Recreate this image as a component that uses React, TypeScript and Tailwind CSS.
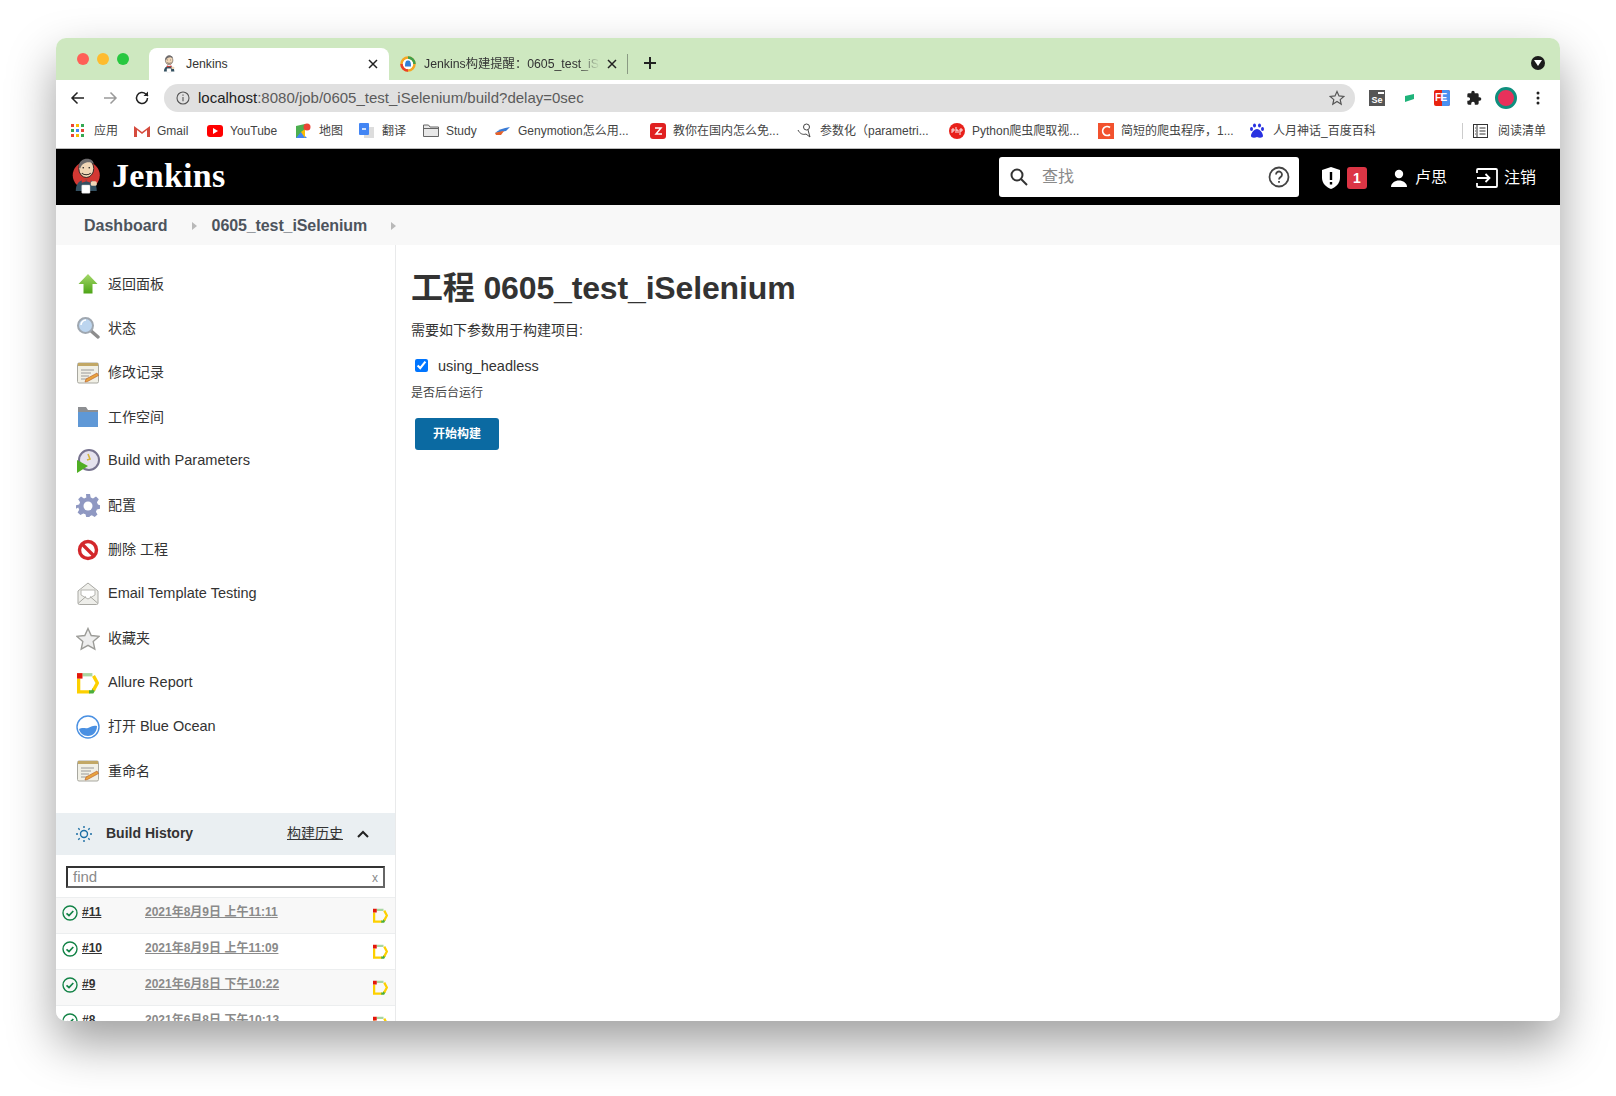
import React from "react";

const Butler = ({ s = 32, disc = true }: { s?: number; disc?: boolean }) => (
  <svg width={s} height={s * 1.2} viewBox="0 0 40 48">
    {disc && <circle cx="19" cy="23" r="18" fill="#d33833" />}
    <path d="M5 44c0-10 5-15 14-15s14 5 14 15z" fill="#335061" />
    <ellipse cx="19" cy="14" rx="10" ry="12" fill="#f0d6b7" stroke="#231f20" strokeWidth="1.2" />
    <path d="M9 12C9 4 15 1 20 1c5 0 9 3 9 7-4-3-10-3-14 0-2 1-3 3-4 6z" fill="#6d6b6d" />
    <path d="M13 20c3 3 9 3 12 0" fill="none" stroke="#231f20" strokeWidth="1.4" />
    <circle cx="15" cy="13" r="1.1" fill="#231f20" />
    <circle cx="23" cy="13" r="1.1" fill="#231f20" />
    <path d="M13 27l6 3 6-3v6l-6-2-6 2z" fill="#d33833" />
    <rect x="13" y="36" width="11" height="11" rx="1" fill="#fff" stroke="#ccc" strokeWidth=".6" />
    <rect x="25" y="31" width="8" height="6" rx="2" fill="#f0d6b7" />
  </svg>
);

const Allure = ({ s = 20 }: { s?: number }) => (
  <svg width={s} height={s} viewBox="0 0 20 20" fill="none" strokeWidth="3">
    <path d="M1.500 6V18H12" stroke="#fdd000" />
    <path d="M11 18H14L15.500 15.500" stroke="#4caf3a" />
    <path d="M15 16.500L18.500 10L15 3.500" stroke="#fdd000" />
    <path d="M5 2.500H14" stroke="#a9d6a0" />
    <rect x="0" y="1" width="5" height="5" fill="#e3170a" />
  </svg>
);

const Notepad = () => (
  <svg width="24" height="24" viewBox="0 0 24 24">
    <rect x="1.500" y="2" width="21" height="20" rx="1.500" fill="#f1f0e6" stroke="#a8a8a0" />
    <rect x="2" y="2" width="20" height="3" fill="#c2a866" />
    <path d="M5 9h13M5 12h10M5 15h8M5 18h7" stroke="#9a9a9a" strokeWidth="1" />
    <path d="M10 18l11-6 1.500 2.500-11 6-2.500.5z" fill="#e8a33d" stroke="#b55a2a" strokeWidth=".6" />
  </svg>
);

const sideIcons: Record<string, React.ReactNode> = {
  up: (
    <svg width="24" height="24" viewBox="0 0 24 24">
      <defs>
        <linearGradient id="upg" x1="0" y1="0" x2="0" y2="1">
          <stop offset="0" stopColor="#a5d86a" />
          <stop offset="1" stopColor="#4da416" />
        </linearGradient>
      </defs>
      <path d="M12 2l9.500 10H16.500v9.500h-9V12H2.500z" fill="url(#upg)" />
    </svg>
  ),
  search: (
    <svg width="24" height="24" viewBox="0 0 24 24">
      <path d="M14 14l8 7" stroke="#8d8d8d" strokeWidth="3.400" strokeLinecap="round" />
      <circle cx="9.500" cy="9.500" r="7.500" fill="#bcd5ef" stroke="#9fa7b0" strokeWidth="2" />
      <path d="M5 9a5 5 0 0 1 5-5" stroke="#fff" strokeWidth="1.500" fill="none" />
    </svg>
  ),
  note: <Notepad />,
  folder: (
    <svg width="24" height="24" viewBox="0 0 24 24">
      <path d="M2 2h8l2 3h10v17H2z" fill="#8d8f92" />
      <path d="M2 7h20v14a1 1 0 0 1-1 1H3a1 1 0 0 1-1-1z" fill="#5f98d6" />
    </svg>
  ),
  build: (
    <svg width="24" height="24" viewBox="0 0 24 24">
      <circle cx="13" cy="11" r="10" fill="#e5e2ee" stroke="#77738f" strokeWidth="2" />
      <path d="M12 5l2 5-3 1" fill="none" stroke="#d6b43a" strokeWidth="1.600" />
      <path d="M1 11l11 6-11 7z" fill="#4fae24" />
    </svg>
  ),
  gear: (
    <svg width="24" height="24" viewBox="0 0 24 24">
      <path
        d="M10 1h4l.7 3.400 2.300 1 3-1.900 2.800 2.800-1.900 3 1 2.300L24 12.300v3.400l-3.100.7-1 2.300 1.600 2.800-2.800 2.500-2.900-1.700-2.200.9L13.800 24h-3.600l-.7-2.700-2.200-.9-2.900 1.700-2.800-2.500 1.600-2.800-1-2.300L0 15.700v-3.400l3.100-.7 1-2.300-1.900-3L5 3.500l3 1.900 2.300-1z"
        transform="translate(0 -1)"
        fill="#8f98c2"
      />
      <circle cx="12" cy="12" r="4.500" fill="#fff" />
    </svg>
  ),
  stop: (
    <svg width="24" height="24" viewBox="0 0 24 24">
      <circle cx="12" cy="12" r="8.500" fill="#fff" stroke="#d3272b" strokeWidth="3.400" />
      <path d="M6 6l12 12" stroke="#d3272b" strokeWidth="3.400" />
    </svg>
  ),
  mail: (
    <svg width="24" height="24" viewBox="0 0 24 24">
      <path d="M2 9l10-8 10 8v12a1.500 1.500 0 0 1-1.500 1.500h-17A1.500 1.500 0 0 1 2 21z" fill="#eeeeea" stroke="#a8a8a3" />
      <path d="M5 8h14v5l-7 4-7-4z" fill="#fff" stroke="#b5b5b0" />
      <path d="M2.500 21L10 14.500M21.500 21L14 14.500" stroke="#a8a8a2" />
    </svg>
  ),
  star: (
    <svg width="24" height="24" viewBox="0 0 24 24">
      <path
        d="M12 1.500l3.200 7 7.800.9-5.800 5.200 1.600 7.600L12 18.300l-6.800 3.900 1.600-7.600L1 9.400l7.800-.9z"
        fill="#eee"
        stroke="#9b9b97"
        strokeWidth="1.400"
      />
    </svg>
  ),
  allure: <Allure s={22} />,
  ocean: (
    <svg width="24" height="24" viewBox="0 0 24 24">
      <circle cx="12" cy="12" r="11" fill="#fff" stroke="#4a90e2" strokeWidth="1.400" />
      <path d="M3 14c4-2 6 0 9-1s5-3 9-2c0 6-4 10-9 10s-8-3-9-7z" fill="#4a90e2" />
    </svg>
  ),
};

const items: [string, React.ReactNode][] = [
  ["up", "返回面板"],
  ["search", "状态"],
  ["note", "修改记录"],
  ["folder", "工作空间"],
  ["build", <span className="text-[14.6px]">Build with Parameters</span>],
  ["gear", "配置"],
  ["stop", "删除 工程"],
  ["mail", <span className="text-[14.5px]">Email Template Testing</span>],
  ["star", "收藏夹"],
  ["allure", <span className="text-[14.5px]">Allure Report</span>],
  ["ocean", <>打开 <span className="text-[14.5px]">Blue Ocean</span></>],
  ["note", "重命名"],
];

const builds = [
  ["#11", "2021年8月9日 上午11:11"],
  ["#10", "2021年8月9日 上午11:09"],
  ["#9", "2021年6月8日 下午10:22"],
  ["#8", "2021年6月8日 下午10:13"],
];

const marks: [React.ReactNode, string, string][] = [
  [
    <svg width="14" height="14" viewBox="0 0 14 14">
      {[1, 6, 11].map((y, r) =>
        [1, 6, 11].map((x, c) => (
          <rect key={`${r}${c}`} x={x - 1} y={y - 1} width="3" height="3" fill={["#ea4335", "#fbbc04", "#34a853", "#4285f4"][(r * 2 + c) % 4]} />
        ))
      )}
    </svg>,
    "应用",
    "w-[63px]",
  ],
  [
    <svg width="16" height="12" viewBox="0 0 16 12">
      <path d="M0 1l8 6 8-6v11h-3V5L8 9 3 5v7H0z" fill="#d54b3d" />
    </svg>,
    "Gmail",
    "w-[73px]",
  ],
  [
    <svg width="16" height="12" viewBox="0 0 16 12">
      <rect width="16" height="12" rx="3" fill="#f00" />
      <path d="M6 3l5 3-5 3z" fill="#fff" />
    </svg>,
    "YouTube",
    "w-[89px]",
  ],
  [
    <svg width="15" height="16" viewBox="0 0 15 16">
      <path d="M0 3l9-2v14H0z" fill="#4caf50" />
      <path d="M0 15l5-6 6 6z" fill="#4285f4" />
      <path d="M5 9l4-3v9z" fill="#fbbc04" />
      <circle cx="11" cy="4" r="3.500" fill="#ea4335" />
    </svg>,
    "地图",
    "w-[63px]",
  ],
  [
    <svg width="15" height="15" viewBox="0 0 15 15">
      <rect x="5" y="4" width="10" height="11" fill="#ddd" />
      <rect width="10" height="12" rx="1" fill="#4285f4" />
      <path d="M3 6h4" stroke="#fff" strokeWidth="1.500" />
    </svg>,
    "翻译",
    "w-[64px]",
  ],
  [
    <svg width="16" height="13" viewBox="0 0 16 13" fill="#e8e8e8" stroke="#666">
      <path d="M.5 1h5l1.500 2h8.500v9.500H.5z" />
      <path d="M.5 4.500h15" />
    </svg>,
    "Study",
    "w-[72px]",
  ],
  [
    <svg width="15" height="8" viewBox="0 0 15 8">
      <path d="M0 6c3-3 8-5 15-6l-4 4z" fill="#3a7bd5" />
      <path d="M0 6c3-1 6-2 9-2L6 8H1z" fill="#e5622a" />
    </svg>,
    "Genymotion怎么用...",
    "w-[155px]",
  ],
  [
    <svg width="16" height="16" viewBox="0 0 16 16">
      <rect width="16" height="16" rx="3" fill="#e02020" />
      <path d="M5 5h6L6 11h6" stroke="#fff" strokeWidth="1.500" fill="none" />
    </svg>,
    "教你在国内怎么免...",
    "w-[147px]",
  ],
  [
    <svg width="15" height="15" viewBox="0 0 15 15" fill="none" stroke="#444" strokeWidth="1">
      <circle cx="9.500" cy="4" r="3" />
      <path d="M1 7c2 4 5 5 8 4l4 3-2-7" />
    </svg>,
    "参数化（parametri...",
    "w-[152px]",
  ],
  [
    <svg width="16" height="16" viewBox="0 0 16 16">
      <circle cx="8" cy="8" r="8" fill="#e8201a" />
      <path d="M3 10V6h2v2H3M7 4v6M7 7h2v3M11 12V6h2v2h-2" stroke="#fff" strokeWidth=".9" fill="none" />
    </svg>,
    "Python爬虫爬取视...",
    "w-[149px]",
  ],
  [
    <svg width="16" height="16" viewBox="0 0 16 16">
      <rect width="16" height="16" fill="#f2522e" />
      <path d="M12 4.500A4.500 4.500 0 1 0 12 11.500" stroke="#fff" strokeWidth="1.700" fill="none" />
    </svg>,
    "简短的爬虫程序，1...",
    "w-[152px]",
  ],
  [
    <svg width="14" height="15" viewBox="0 0 14 15" fill="#2932e1">
      <ellipse cx="4.500" cy="2.500" rx="1.500" ry="2" />
      <ellipse cx="9.500" cy="2.500" rx="1.500" ry="2" />
      <ellipse cx="1.500" cy="6" rx="1.500" ry="2" />
      <ellipse cx="12.500" cy="6" rx="1.500" ry="2" />
      <path d="M7 6c3 0 6 4 6 7 0 2-4 2-6 1-2 1-6 1-6-1 0-3 3-7 6-7z" />
    </svg>,
    "人月神话_百度百科",
    "",
  ],
];

export default function App() {
  return (
    <div className="w-[1616px] h-[1096px] bg-white pt-[38px] pl-[56px] overflow-hidden font-['Liberation_Sans','Noto_Sans_CJK_SC',sans-serif]">
      <div className="w-[1504px] h-[983px] rounded-[10px] overflow-hidden bg-white flex flex-col shadow-[0_22px_48px_rgba(0,0,0,0.38)]">
        {/* tab strip */}
        <div className="h-[42px] shrink-0 bg-[#cee8c0] flex items-end relative">
          <div className="flex items-center gap-[8px] pl-[21px] w-[93px] h-[32px] self-end mb-[5px]">
            <span className="w-[12px] h-[12px] rounded-full bg-[#ff5f57]" />
            <span className="w-[12px] h-[12px] rounded-full bg-[#febc2e]" />
            <span className="w-[12px] h-[12px] rounded-full bg-[#28c840]" />
          </div>
          <div className="w-[240px] h-[32px] bg-white rounded-t-[8px] flex items-center pl-[13px] pr-[11px] text-[12px] text-[#333]">
            <Butler s={15} disc={false} />
            <span className="ml-[9px] grow text-[12.3px]">Jenkins</span>
            <svg width="10" height="10" viewBox="0 0 10 10" stroke="#222" strokeWidth="1.500">
              <path d="M1 1l8 8M9 1l-8 8" />
            </svg>
          </div>
          <div className="w-[238px] h-[32px] flex items-center pl-[11px] pr-[10px] text-[12px] text-[#333]">
            <svg width="16" height="16" viewBox="0 0 16 16" className="shrink-0">
              <circle cx="8" cy="8" r="6.500" fill="#fff" stroke="#f5a623" strokeWidth="2.500" />
              <path d="M1.500 8a6.500 6.500 0 0 0 6.500 6.500" fill="none" stroke="#e8402a" strokeWidth="2.500" />
              <path d="M8 1.500a6.500 6.500 0 0 1 6.500 6.500" fill="none" stroke="#3fa04b" strokeWidth="2.500" />
              <path d="M5 10.500c0-5 1-6 3-6s3 1 3 6z" fill="#2f80d8" />
            </svg>
            <span className="ml-[8px] w-[176px] overflow-hidden whitespace-nowrap text-[12.300px] [mask-image:linear-gradient(to_right,#000_88%,transparent)]">
              Jenkins构建提醒：0605_test_iSelenium
            </span>
            <svg width="10" height="10" viewBox="0 0 10 10" stroke="#222" strokeWidth="1.500" className="ml-auto shrink-0">
              <path d="M1 1l8 8M9 1l-8 8" />
            </svg>
          </div>
          <div className="w-px h-[20px] bg-[#8a9a83] mb-[6px]" />
          <svg width="14" height="14" viewBox="0 0 14 14" stroke="#222" strokeWidth="2" className="ml-[15px] mb-[10px]">
            <path d="M7 1v12M1 7h12" />
          </svg>
          <div className="ml-auto mr-[15px] mb-[10px] w-[14px] h-[14px] rounded-full bg-[#1c1c1c] flex items-center justify-center">
            <svg width="8" height="6" viewBox="0 0 8 6" fill="#fff">
              <path d="M0 0h8L4 6z" />
            </svg>
          </div>
        </div>
        {/* toolbar */}
        <div className="h-[33px] shrink-0 flex items-center pt-[3px]">
          <svg width="16" height="16" viewBox="0 0 16 16" fill="none" stroke="#222" strokeWidth="1.500" className="ml-[14px]">
            <path d="M14 8H2M7.500 2.500L2 8l5.500 5.500" />
          </svg>
          <svg width="16" height="16" viewBox="0 0 16 16" fill="none" stroke="#9a9a9a" strokeWidth="1.500" className="ml-[16px]">
            <path d="M2 8h12M8.500 2.500L14 8l-5.500 5.500" />
          </svg>
          <svg width="16" height="16" viewBox="0 0 16 16" fill="none" stroke="#222" strokeWidth="1.500" className="ml-[16px]">
            <path d="M13.500 8a5.500 5.500 0 1 1-1.700-4L14 6" />
            <path d="M14 1.500V6H9.500" fill="#222" stroke="none" />
          </svg>
          <div className="ml-[14px] w-[1191px] h-[28px] rounded-full bg-[#e0e0e0] flex items-center pl-[12px] pr-[10px]">
            <svg width="14" height="14" viewBox="0 0 14 14" fill="none" stroke="#555" strokeWidth="1.100">
              <circle cx="7" cy="7" r="6" />
              <path d="M7 6v4.200M7 3.500v1.300" />
            </svg>
            <span className="ml-[8px] text-[15px] text-[#5b5b5b]">
              <span className="text-[#222]">localhost</span>:8080/job/0605_test_iSelenium/build?delay=0sec
            </span>
            <svg width="16" height="16" viewBox="0 0 16 16" fill="none" stroke="#555" strokeWidth="1.200" className="ml-auto">
              <path d="M8 1.500l2 4.400 4.800.5-3.600 3.200 1 4.700L8 11.500l-4.200 2.800 1-4.700L1.200 6.400 6 5.900z" />
            </svg>
          </div>
          <div className="ml-[14px] w-[16px] h-[16px] bg-[#555] relative flex items-end justify-center text-white text-[9px] leading-[11px] font-bold">
            Se
            <span className="absolute top-[2px] right-[1px] w-[6px] h-[2px] bg-white" />
          </div>
          <svg width="10" height="8" viewBox="0 0 10 8" className="ml-[20px]">
            <path d="M0 2l9-2v5l-9 3z" fill="#1fb37a" />
          </svg>
          <div className="ml-[19px] w-[16px] h-[16px] rounded-[2px] bg-[#e8230f] relative overflow-hidden flex items-center text-white text-[10px] font-bold leading-none">
            <span className="absolute right-0 top-0 w-[8px] h-[16px] bg-[#4a90f0]" />
            <span className="relative tracking-[-0.5px] pl-[1px]">FE</span>
          </div>
          <svg width="16" height="16" viewBox="0 0 24 24" fill="#222" className="ml-[16px]">
            <path d="M20.500 11H19V7a2 2 0 0 0-2-2h-4V3.500a2.500 2.500 0 0 0-5 0V5H4a2 2 0 0 0-2 2v3.800h1.500a2.700 2.700 0 0 1 0 5.400H2V20a2 2 0 0 0 2 2h3.800v-1.500a2.700 2.700 0 0 1 5.400 0V22H17a2 2 0 0 0 2-2v-4h1.500a2.500 2.500 0 0 0 0-5z" />
          </svg>
          <div className="ml-[13px] w-[22px] h-[22px] rounded-full bg-[#e8315b] border-[3px] border-[#0f8f7e]" />
          <svg width="4" height="14" viewBox="0 0 4 14" fill="#222" className="ml-[19px]">
            <circle cx="2" cy="2" r="1.500" />
            <circle cx="2" cy="7" r="1.500" />
            <circle cx="2" cy="12" r="1.500" />
          </svg>
        </div>
        {/* bookmarks */}
        <div className="h-[36px] shrink-0 flex items-center pl-[15px] pr-[14px] text-[12px] text-[#444] border-b border-[#bbb]">
          {marks.map(([icon, label, w], i) => (
            <div key={i} className={`flex items-center shrink-0 ${w}`}>
              <span className="w-[23px] shrink-0 flex items-center">{icon}</span>
              <span className="whitespace-nowrap">{label}</span>
            </div>
          ))}
          <div className="ml-auto h-[16px] w-px bg-[#ccc] mr-[10px]" />
          <svg width="15" height="14" viewBox="0 0 15 14" fill="none" stroke="#333" className="mr-[10px]">
            <rect x=".5" y=".5" width="14" height="13" />
            <path d="M4 .5v13M6.500 4h6M6.500 7h6M6.500 10h6M2 4h.8M2 7h.8M2 10h.8" />
          </svg>
          <span>阅读清单</span>
        </div>
        {/* jenkins header */}
        <header className="h-[56px] shrink-0 bg-black flex items-center text-white">
          <div className="ml-[16px] mt-[-2px]">
            <Butler s={30} />
          </div>
          <span className="ml-[10px] mt-[-2px] font-['Liberation_Serif',serif] font-bold text-[34px] tracking-[0.3px] leading-none">Jenkins</span>
          <div className="ml-auto w-[300px] h-[40px] bg-white rounded-[3px] flex items-center pl-[10px] pr-[9px] text-[#8a8a8a]">
            <svg width="20" height="20" viewBox="0 0 20 20" fill="none" stroke="#333" strokeWidth="2">
              <circle cx="8" cy="8" r="5.500" />
              <path d="M12 12l6 6" />
            </svg>
            <span className="ml-[13px] text-[16px] grow">查找</span>
            <svg width="22" height="22" viewBox="0 0 22 22" fill="none" stroke="#444" strokeWidth="1.800">
              <circle cx="11" cy="11" r="9.500" />
              <path d="M8 8.500a3 3 0 1 1 4.500 2.600c-1 .6-1.500 1-1.500 2.400M11 15v1.800" />
            </svg>
          </div>
          <svg width="18" height="22" viewBox="0 0 18 22" className="ml-[23px] mt-[2px]">
            <path d="M9 0l9 3v8c0 5-4 9-9 11-5-2-9-6-9-11V3z" fill="#fff" />
            <path d="M9 5v8M9 15v2.500" stroke="#000" strokeWidth="2.400" />
          </svg>
          <span className="ml-[7px] mt-[2px] w-[20px] h-[22px] bg-[#dc3545] rounded-[3px] flex items-center justify-center text-[14px] font-bold">1</span>
          <svg width="18" height="18" viewBox="0 0 18 18" fill="#fff" className="ml-[23px] mt-[2px]">
            <circle cx="9" cy="5" r="4.200" />
            <path d="M1 18c0-4 4-6.500 8-6.500s8 2.500 8 6.500z" />
          </svg>
          <span className="ml-[7px] mt-[2px] text-[16px]">卢思</span>
          <svg width="22" height="20" viewBox="0 0 22 20" fill="none" stroke="#fff" strokeWidth="1.800" className="ml-[29px] mt-[2px]">
            <path d="M1 5V2a1 1 0 0 1 1-1h18a1 1 0 0 1 1 1v16a1 1 0 0 1-1 1H2a1 1 0 0 1-1-1v-3" />
            <path d="M1 10h12M9.500 6l4 4-4 4" />
          </svg>
          <span className="ml-[6px] mt-[2px] mr-[24px] text-[16px]">注销</span>
        </header>
        {/* breadcrumbs */}
        <div className="h-[40px] shrink-0 bg-[#f8f8f8] flex items-center pt-[2px] text-[16px] font-bold text-[#4d545d]">
          <span className="ml-[28px]">Dashboard</span>
          <svg width="5" height="8" viewBox="0 0 5 8" fill="#b9b9b9" className="ml-[24px]">
            <path d="M0 0l5 4-5 4z" />
          </svg>
          <span className="ml-[15px] tracking-[-0.1px]">0605_test_iSelenium</span>
          <svg width="5" height="8" viewBox="0 0 5 8" fill="#b9b9b9" className="ml-[24px]">
            <path d="M0 0l5 4-5 4z" />
          </svg>
        </div>
        {/* body */}
        <div className="flex grow min-h-0">
          <aside className="w-[340px] shrink-0 border-r border-[#e9eaeb] flex flex-col overflow-hidden">
            <nav className="pt-[17px] pb-[19px]">
              {items.map(([ic, t], i) => (
                <div key={i} className="h-[44.3px] flex items-center pl-[20px] text-[14px] text-[#333]">
                  <span className="w-[24px] h-[24px] flex items-center justify-center shrink-0">{sideIcons[ic]}</span>
                  <span className="ml-[8px]">{t}</span>
                </div>
              ))}
            </nav>
            <div className="h-[42px] shrink-0 bg-[#eaeff2] flex items-center text-[14px] text-[#333]">
              <svg width="16" height="16" viewBox="0 0 16 16" fill="none" stroke="#1c6ea4" className="ml-[20px]">
                <circle cx="8" cy="8" r="3.500" strokeWidth="1.400" />
                <path d="M8 0v2M8 14v2M0 8h2M14 8h2M2.300 2.300l1.400 1.400M12.300 12.300l1.400 1.400M2.300 13.700l1.400-1.400M12.300 3.700l1.400-1.400" strokeWidth="1.400" />
              </svg>
              <span className="ml-[14px] font-bold">Build History</span>
              <span className="ml-auto underline">构建历史</span>
              <svg width="12" height="8" viewBox="0 0 12 8" fill="none" stroke="#222" strokeWidth="2" className="ml-[14px] mr-[26px]">
                <path d="M1 7l5-5 5 5" />
              </svg>
            </div>
            <div className="px-[10px] pt-[11px] pb-[9px] shrink-0">
              <div className="h-[22px] border-2 border-[#333] border-b-[#666] border-r-[#666] flex items-center justify-between px-[5px] pt-[2px] text-[15px] text-[#8a8a8a]">
                <span>find</span>
                <span className="text-[12px]">x</span>
              </div>
            </div>
            {builds.map(([n, d], i) => (
              <div
                key={n}
                className={`h-[36px] shrink-0 border-t border-[#eceeef] flex items-start pt-[5px] pl-[6px] text-[12px] ${i % 2 === 0 ? "bg-[#f8f8f8]" : "bg-white"}`}
              >
                <svg width="16" height="16" viewBox="0 0 16 16" fill="none" stroke="#138347" strokeWidth="1.400" className="shrink-0 mt-[2px]">
                  <circle cx="8" cy="8" r="7" />
                  <path d="M4.500 8.300l2.500 2.200 4.300-4.500" strokeWidth="1.700" />
                </svg>
                <span className="ml-[4px] w-[63px] font-bold underline text-[#333]">{n}</span>
                <span className="font-bold underline text-[#8a8a8a] whitespace-nowrap">{d}</span>
                <span className="ml-auto mr-[7px] mt-[5px]">
                  <Allure s={15} />
                </span>
              </div>
            ))}
          </aside>
          <main className="grow pl-[15px] pt-[23px] text-[#333]">
            <h1 className="text-[32px] leading-[40px] font-bold tracking-[-0.15px]">工程 0605_test_iSelenium</h1>
            <p className="mt-[12px] text-[14px] leading-[20px]">需要如下参数用于构建项目:</p>
            <label className="mt-[16px] ml-[4px] flex items-center text-[14.5px] leading-[20px]">
              <input type="checkbox" defaultChecked className="w-[13px] h-[13px] accent-[#0075ff] mb-[2px]" />
              <span className="ml-[10px]">using_headless</span>
            </label>
            <p className="mt-[7px] text-[12px] leading-[20px] text-[#444]">是否后台运行</p>
            <button className="mt-[15px] ml-[4px] block w-[84px] h-[32px] rounded-[3px] bg-[#0b6aa2] text-white text-[12px] font-bold">开始构建</button>
          </main>
        </div>
      </div>
    </div>
  );
}
